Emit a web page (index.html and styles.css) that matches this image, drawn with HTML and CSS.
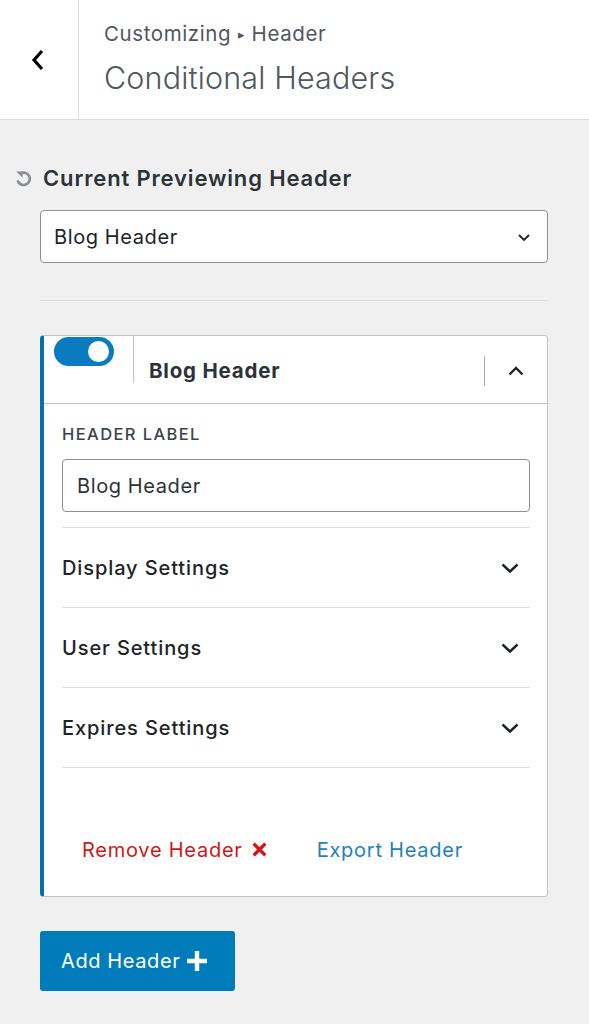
FILE: index.html
```html
<!DOCTYPE html>
<html lang="en">
<head>
    <meta charset="UTF-8">
    <meta name="viewport" content="width=device-width, initial-scale=1.0">
    <title>Conditional Headers</title>
    <link rel="stylesheet" href="styles.css">
</head>
<body>
    <div class="topbar">
        <div class="back">
            <svg width="16" height="24" viewBox="0 0 16 24"><path d="M12 3 L4 12 L12 21" fill="none" stroke="#000" stroke-width="3.2"/></svg>
        </div>
        <div class="titles">
            <div class="crumb">Customizing <span class="tri">&#9656;</span> Header</div>
            <div class="title">Conditional Headers</div>
        </div>
    </div>

    <div class="panel">
        <div class="preview-title">
            <svg class="refresh" width="17" height="17" viewBox="0 0 17 17"><path d="M5.2 3.6 A6.2 6.2 0 1 1 2.6 10.4" fill="none" stroke="#8c8f94" stroke-width="2.7"/><path d="M1.2 1.4 L7.6 1.4 L7.6 7.8 Z" fill="#8c8f94"/></svg>
            <span>Current Previewing Header</span>
        </div>
        <div class="select">
            <span>Blog Header</span>
            <svg width="14" height="10" viewBox="0 0 14 10"><path d="M2 3 L7 8 L12 3" fill="none" stroke="#1d2327" stroke-width="1.8"/></svg>
        </div>
        <div class="sep"></div>

        <div class="card">
            <div class="card-head">
                <div class="toggle-cell"><div class="toggle"><div class="knob"></div></div></div>
                <div class="card-name">Blog Header</div>
                <div class="collapse">
                    <svg width="18" height="12" viewBox="0 0 18 12"><path d="M2.5 9.5 L9 3 L15.5 9.5" fill="none" stroke="#1d2327" stroke-width="2.4"/></svg>
                </div>
            </div>
            <div class="card-body">
                <div class="label">HEADER LABEL</div>
                <div class="text-input">Blog Header</div>
                <div class="row"><span>Display Settings</span><svg width="20" height="12" viewBox="0 0 20 12"><path d="M2.5 2.5 L10 9.5 L17.5 2.5" fill="none" stroke="#1d2327" stroke-width="2.4"/></svg></div>
                <div class="row"><span>User Settings</span><svg width="20" height="12" viewBox="0 0 20 12"><path d="M2.5 2.5 L10 9.5 L17.5 2.5" fill="none" stroke="#1d2327" stroke-width="2.4"/></svg></div>
                <div class="row"><span>Expires Settings</span><svg width="20" height="12" viewBox="0 0 20 12"><path d="M2.5 2.5 L10 9.5 L17.5 2.5" fill="none" stroke="#1d2327" stroke-width="2.4"/></svg></div>
                <div class="actions">
                    <span class="remove">Remove Header <svg width="17" height="17" viewBox="0 0 16 16"><path d="M2.5 2.5 L13.5 13.5 M13.5 2.5 L2.5 13.5" stroke="#cc1818" stroke-width="3.2"/></svg></span>
                    <span class="export">Export Header</span>
                </div>
            </div>
        </div>

        <button class="add">Add Header <svg width="22" height="22" viewBox="0 0 22 22"><path d="M11 1 V21 M1 11 H21" stroke="#fff" stroke-width="4.4"/></svg></button>
    </div>
</body>
</html>
```

FILE: styles.css
```css
body {
    margin: 0;
    background: #f0f0f1;
    font-family: Inter, "Open Sans", sans-serif;
    color: #1d2327;
    width: 589px;
    height: 1024px;
    overflow: hidden;
}
.topbar {
    display: flex;
    height: 119px;
    background: #fff;
    border-bottom: 1px solid #dcdcde;
}
.back {
    width: 79px;
    border-right: 1px solid #dcdcde;
    display: flex;
    align-items: center;
    justify-content: center;
    padding-right: 3px;
    box-sizing: border-box;
}
.titles {
    padding: 20px 0 0 25px;
    color: #50575e;
}
.crumb {
    font-size: 20.5px;
    line-height: 28px;
    letter-spacing: 0.6px;
}
.tri {
    font-size: 13px;
    position: relative;
    top: -2px;
}
.title {
    font-size: 30.5px;
    font-weight: 300;
    line-height: 40px;
    margin-top: 8px;
    letter-spacing: 0.15px;
}
.panel {
    padding: 43px 41px 0 40px;
}
.preview-title {
    display: flex;
    align-items: center;
    margin-left: -25px;
    font-size: 22px;
    font-weight: 600;
    color: #2c3338;
    height: 30px;
    letter-spacing: 0.85px;
}
.refresh {
    margin-right: 11px;
}
.select {
    margin-top: 17px;
    height: 53px;
    background: #fff;
    border: 1px solid #8c8f94;
    border-radius: 4px;
    box-sizing: border-box;
    display: flex;
    align-items: center;
    justify-content: space-between;
    padding: 0 16px 0 13px;
    font-size: 20px;
    letter-spacing: 0.6px;
}
.sep {
    margin-top: 37px;
    border-top: 1px solid #dcdcde;
}
.card {
    margin-top: 34px;
    background: #fff;
    border: 1px solid #c3c4c7;
    border-left: 4px solid #0073aa;
    border-radius: 4px;
}
.card-head {
    display: flex;
    height: 67px;
    border-bottom: 1px solid #c3c4c7;
}
.toggle-cell {
    width: 90px;
    border-right: 1px solid #c3c4c7;
    height: 47px;
    padding: 1px 0 0 10px;
    box-sizing: border-box;
}
.toggle {
    width: 60px;
    height: 29px;
    background: #0a7bbf;
    border-radius: 15px;
    position: relative;
}
.knob {
    position: absolute;
    right: 5px;
    top: 4px;
    width: 21px;
    height: 21px;
    border-radius: 50%;
    background: #fff;
}
.card-name {
    flex: 1;
    padding: 22px 0 0 15px;
    font-size: 20.5px;
    font-weight: 700;
    color: #2c3338;
    letter-spacing: 0.8px;
}
.collapse {
    width: 62px;
    height: 30px;
    margin-top: 20px;
    border-left: 1px solid #a7aaad;
    display: flex;
    align-items: center;
    justify-content: center;
}
.card-body {
    padding: 19px 17px 0 18px;
}
.label {
    font-size: 16.5px;
    font-weight: 500;
    color: #3c434a;
    letter-spacing: 1.4px;
    line-height: 22px;
}
.text-input {
    margin-top: 14px;
    height: 53px;
    border: 1px solid #8c8f94;
    border-radius: 4px;
    box-sizing: border-box;
    display: flex;
    align-items: center;
    padding-left: 14px;
    font-size: 20px;
    color: #2c3338;
    letter-spacing: 0.6px;
}
.row {
    margin-top: 15px;
    border-top: 1px solid #dcdcde;
    height: 80px;
    box-sizing: border-box;
    display: flex;
    align-items: center;
    justify-content: space-between;
    padding-right: 10px;
    font-size: 20px;
    font-weight: 500;
    color: #1d2327;
    letter-spacing: 0.9px;
}
.row + .row {
    margin-top: 0;
}
.actions {
    border-top: 1px solid #dcdcde;
    height: 129px;
    display: flex;
    align-items: center;
    padding: 35px 0 0 20px;
    box-sizing: border-box;
    font-size: 20px;
    letter-spacing: 0.75px;
}
.remove {
    color: #cc1818;
    display: flex;
    align-items: center;
    gap: 8px;
}
.export {
    color: #2283b7;
    margin-left: 49px;
}
.add {
    margin-top: 34px;
    height: 60px;
    width: 195px;
    background: #007cba;
    border: none;
    border-radius: 3px;
    color: #fff;
    font-family: Inter, "Open Sans", sans-serif;
    font-size: 20px;
    letter-spacing: 0.6px;
    display: flex;
    align-items: center;
    padding-left: 21px;
    gap: 6px;
}
```
